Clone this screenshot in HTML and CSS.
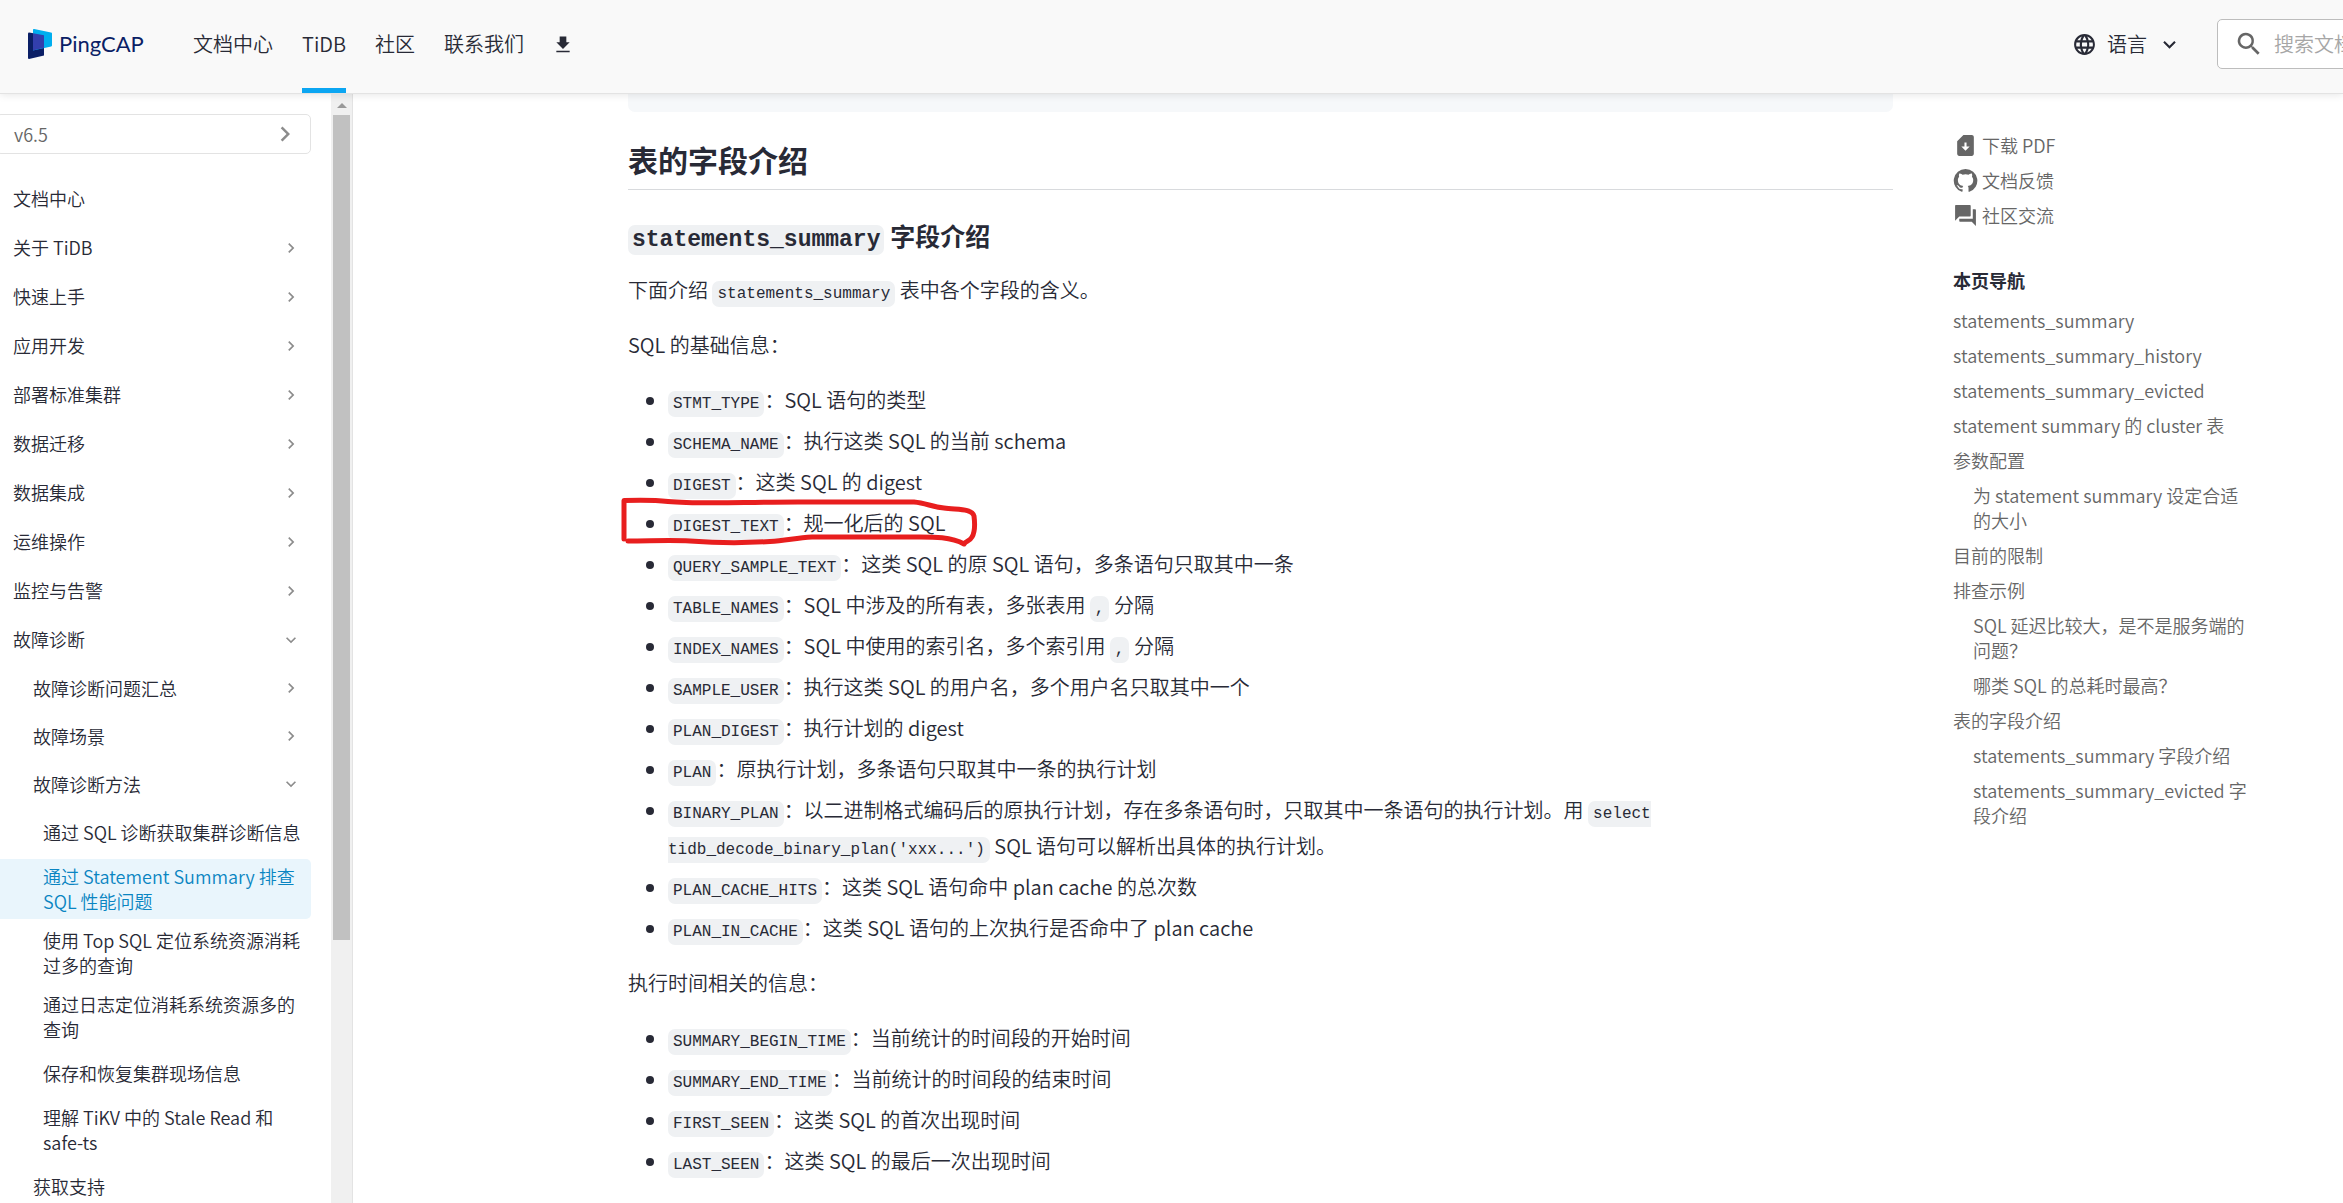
FILE: index.html
```html
<!DOCTYPE html>
<html lang="zh-CN">
<head>
<meta charset="utf-8">
<title>Statement Summary Tables | PingCAP 文档中心</title>
<link rel="stylesheet" href="styles.css">
</head>
<body>
<svg class="defs" aria-hidden="true">
  <symbol id="chev" viewBox="0 0 24 24"><path d="M8.6 16.6 13.2 12 8.6 7.4 10 6l6 6-6 6z"/></symbol>
</svg>

<header class="topbar">
  <a class="logo" href="#">
    <svg width="24" height="30" viewBox="0 0 24 30" aria-hidden="true">
      <path d="M1 3.6 16 6v20.500L1 30a1 1 0 0 1-1-1V4.500a1 1 0 0 1 1-.9z" fill="#0b1f66"/>
      <path d="M5 .9a1 1 0 0 1 1.200-.9L23 3.600a1 1 0 0 1 1 1V16.500a1 1 0 0 1-.8 1L5 21.500z" fill="#00aeef"/>
      <path d="M5 4.200 16 6.300v12.500L5 21.500z" fill="#333fad"/>
    </svg>
    <span>PingCAP</span>
  </a>
  <nav class="topnav">
    <a href="#">文档中心</a>
    <a href="#" class="current">TiDB</a>
    <a href="#">社区</a>
    <a href="#">联系我们</a>
    <a href="#" aria-label="下载"><svg width="20" height="20" viewBox="0 0 24 24"><path d="M20 10h-4V3H8v7H4l8 8zM4 20h16v2H4z"/></svg></a>
  </nav>
  <button class="lang" type="button">
    <svg width="25" height="25" viewBox="0 0 24 24"><path d="M12 2C6.500 2 2 6.500 2 12s4.500 10 10 10 10-4.500 10-10S17.500 2 12 2zm6.900 6h-2.900a15.700 15.700 0 0 0-1.400-3.600A8 8 0 0 1 18.900 8zM12 4c.8 1.200 1.500 2.500 1.900 4h-3.800c.4-1.500 1.100-2.800 1.900-4zM4.300 14a8.200 8.200 0 0 1 0-4h3.300a16.500 16.500 0 0 0 0 4zm.8 2H8c.3 1.300.8 2.500 1.400 3.600A8 8 0 0 1 5.100 16zM8 8H5.100a8 8 0 0 1 4.300-3.600A15.700 15.700 0 0 0 8 8zm4 12c-.8-1.200-1.500-2.500-1.900-4h3.800c-.4 1.400-1.100 2.800-1.900 4zm2.300-6H9.700a14.700 14.700 0 0 1 0-4h4.700a14.700 14.700 0 0 1 0 4zm.3 5.600c.6-1.100 1.100-2.300 1.400-3.600h2.900a8 8 0 0 1-4.300 3.600zM16.400 14a16.500 16.500 0 0 0 0-4h3.400a8.200 8.200 0 0 1 0 4z"/></svg>
    <span>语言</span>
    <svg class="down" width="25" height="25"><use href="#chev"/></svg>
  </button>
  <label class="search">
    <svg width="30" height="30" viewBox="0 0 24 24"><path d="M15.500 14h-.8l-.3-.3A6.500 6.500 0 1 0 13.700 14.400l.3.3v.8l5 5 1.500-1.500zm-6 0a4.500 4.500 0 1 1 0-9 4.500 4.500 0 0 1 0 9z"/></svg>
    <input type="search" placeholder="搜索文档" aria-label="搜索文档">
  </label>
</header>

<div class="page">
  <aside class="side">
    <div class="side-body">
      <button class="version" type="button"><span>v6.5</span><svg width="30" height="30"><use href="#chev"/></svg></button>
      <nav class="tree">
        <a href="#">文档中心</a>
        <a href="#">关于 TiDB<svg><use href="#chev"/></svg></a>
        <a href="#">快速上手<svg><use href="#chev"/></svg></a>
        <a href="#">应用开发<svg><use href="#chev"/></svg></a>
        <a href="#">部署标准集群<svg><use href="#chev"/></svg></a>
        <a href="#">数据迁移<svg><use href="#chev"/></svg></a>
        <a href="#">数据集成<svg><use href="#chev"/></svg></a>
        <a href="#">运维操作<svg><use href="#chev"/></svg></a>
        <a href="#">监控与告警<svg><use href="#chev"/></svg></a>
        <a href="#">故障诊断<svg class="down"><use href="#chev"/></svg></a>
        <a href="#" class="l1">故障诊断问题汇总<svg><use href="#chev"/></svg></a>
        <a href="#" class="l1">故障场景<svg><use href="#chev"/></svg></a>
        <a href="#" class="l1">故障诊断方法<svg class="down"><use href="#chev"/></svg></a>
        <a href="#" class="l2">通过 SQL 诊断获取集群诊断信息</a>
        <a href="#" class="l2 active">通过 Statement Summary 排查 SQL 性能问题</a>
        <a href="#" class="l2">使用 Top SQL 定位系统资源消耗过多的查询</a>
        <a href="#" class="l2">通过日志定位消耗系统资源多的查询</a>
        <a href="#" class="l2">保存和恢复集群现场信息</a>
        <a href="#" class="l2">理解 TiKV 中的 Stale Read 和 safe-ts</a>
        <a href="#" class="l1">获取支持</a>
      </nav>
    </div>
    <div class="scrollbar" aria-hidden="true"><div class="arrow"></div><div class="thumb"></div></div>
  </aside>

  <main class="doc">
    <div class="block-end"></div>
    <h2>表的字段介绍</h2>
    <h3><code>statements_summary</code> 字段介绍</h3>
    <p>下面介绍 <code>statements_summary</code> 表中各个字段的含义。</p>
    <p>SQL 的基础信息：</p>
    <ul>
      <li><code>STMT_TYPE</code>：SQL 语句的类型</li>
      <li><code>SCHEMA_NAME</code>：执行这类 SQL 的当前 schema</li>
      <li><code>DIGEST</code>：这类 SQL 的 digest</li>
      <li class="marked"><code>DIGEST_TEXT</code>：规一化后的 SQL
        <svg class="pen" width="368" height="58" viewBox="616 494 368 58" aria-hidden="true"><path d="M624 539V500.500C640 500 655 500 668 501.500 700 504.500 740 502 798 502H914C926 503 932 507 944 508 956 510 972 508 974 516 975 524 975 532 972 537 970 541 966 541 964 544 950 536 930 537 911 537H812C795 538 785 541 770 541.500 740 543.500 710 542.500 690 541 670 540 650 541 628 541"/></svg></li>
      <li><code>QUERY_SAMPLE_TEXT</code>：这类 SQL 的原 SQL 语句，多条语句只取其中一条</li>
      <li><code>TABLE_NAMES</code>：SQL 中涉及的所有表，多张表用 <code>,</code> 分隔</li>
      <li><code>INDEX_NAMES</code>：SQL 中使用的索引名，多个索引用 <code>,</code> 分隔</li>
      <li><code>SAMPLE_USER</code>：执行这类 SQL 的用户名，多个用户名只取其中一个</li>
      <li><code>PLAN_DIGEST</code>：执行计划的 digest</li>
      <li><code>PLAN</code>：原执行计划，多条语句只取其中一条的执行计划</li>
      <li><code>BINARY_PLAN</code>：以二进制格式编码后的原执行计划，存在多条语句时，只取其中一条语句的执行计划。用 <code>select tidb_decode_binary_plan('xxx...')</code> SQL 语句可以解析出具体的执行计划。</li>
      <li><code>PLAN_CACHE_HITS</code>：这类 SQL 语句命中 plan cache 的总次数</li>
      <li><code>PLAN_IN_CACHE</code>：这类 SQL 语句的上次执行是否命中了 plan cache</li>
    </ul>
    <p>执行时间相关的信息：</p>
    <ul>
      <li><code>SUMMARY_BEGIN_TIME</code>：当前统计的时间段的开始时间</li>
      <li><code>SUMMARY_END_TIME</code>：当前统计的时间段的结束时间</li>
      <li><code>FIRST_SEEN</code>：这类 SQL 的首次出现时间</li>
      <li><code>LAST_SEEN</code>：这类 SQL 的最后一次出现时间</li>
    </ul>
  </main>

  <aside class="toc">
    <div class="actions">
      <a href="#"><svg viewBox="0 0 24 24"><path d="M18 2h-8L4 8v12c0 1.100.9 2 2 2h12c1.100 0 2-.9 2-2V4c0-1.100-.9-2-2-2zm-6 15-4-4h3V9h2v4h3z"/></svg>下载 PDF</a>
      <a href="#"><svg viewBox="0 0 24 24"><path d="M12 .9A11.300 11.300 0 0 0 8.400 22.900c.6.100.8-.2.8-.5v-2.100c-3.200.7-3.900-1.400-3.900-1.400-.5-1.300-1.300-1.700-1.300-1.700-1-.7.100-.7.100-.7 1.200.1 1.800 1.200 1.800 1.200 1 1.800 2.700 1.300 3.300 1 .1-.8.400-1.300.7-1.500-2.500-.3-5.200-1.300-5.200-5.700 0-1.200.5-2.300 1.200-3.100-.1-.3-.5-1.500.1-3 0 0 1-.3 3.200 1.100a11 11 0 0 1 5.700 0c2.200-1.500 3.200-1.200 3.200-1.200.6 1.600.2 2.800.1 3.100.7.8 1.200 1.800 1.200 3.100 0 4.400-2.700 5.400-5.300 5.700.4.300.8 1 .8 2.100v3.100c0 .3.200.7.800.5A11.300 11.300 0 0 0 12 .9z"/></svg>文档反馈</a>
      <a href="#"><svg viewBox="0 0 24 24"><path d="M21 6h-2v9H6v2c0 .6.400 1 1 1h11l4 4V7c0-.6-.4-1-1-1zm-4 6V3c0-.6-.4-1-1-1H3c-.6 0-1 .4-1 1v14l4-4h10c.6 0 1-.4 1-1z"/></svg>社区交流</a>
    </div>
    <h4>本页导航</h4>
    <nav class="toc-list">
      <a href="#">statements_summary</a>
      <a href="#">statements_summary_history</a>
      <a href="#">statements_summary_evicted</a>
      <a href="#">statement summary 的 cluster 表</a>
      <a href="#">参数配置</a>
      <a href="#" class="sub">为 statement summary 设定合适的大小</a>
      <a href="#">目前的限制</a>
      <a href="#">排查示例</a>
      <a href="#" class="sub">SQL 延迟比较大，是不是服务端的问题？</a>
      <a href="#" class="sub">哪类 SQL 的总耗时最高？</a>
      <a href="#">表的字段介绍</a>
      <a href="#" class="sub">statements_summary 字段介绍</a>
      <a href="#" class="sub">statements_summary_evicted 字段介绍</a>
    </nav>
  </aside>
</div>
</body>
</html>
```
FILE: styles.css
```css
* { box-sizing: border-box; }

body {
  margin: 0;
  height: 100vh;
  display: flex;
  flex-direction: column;
  overflow: hidden;
  background: #fff;
  color: #282a36;
  font: 350 20px/36px "Noto Sans CJK SC", sans-serif;
}

a { color: inherit; text-decoration: none; }
button { font: inherit; color: inherit; cursor: pointer; }
svg { flex: none; fill: currentColor; }
.defs { position: absolute; width: 0; height: 0; }
.down { rotate: 90deg; }

/* Top bar */
.topbar {
  flex: none;
  position: relative;
  z-index: 1;
  display: flex;
  align-items: center;
  height: 94px;
  padding: 0 0 5px 28px;
  overflow: hidden;
  background: #f9f9f9;
  border-bottom: 1px solid #e3e3e3;
  box-shadow: 0 1px 8px rgba(0, 0, 0, 0.1);
}
.logo {
  display: flex;
  align-items: center;
  gap: 7px;
  width: 135px;
  color: #0b1f66;
  font: 22px/30px Lato, sans-serif;
}
.topnav { display: flex; gap: 29px; margin: 0 0 -5px 30px; align-self: stretch; }
.topnav a {
  display: flex;
  align-items: center;
  border-bottom: 5px solid transparent;
}
.topnav .current { border-color: #0ca6f2; }
.lang {
  display: flex;
  align-items: center;
  gap: 10px;
  margin-left: auto;
  padding: 0;
  border: 0;
  background: none;
}
.search {
  display: flex;
  align-items: center;
  flex: none;
  gap: 10px;
  width: 300px;
  height: 50px;
  margin: 0 -174px 0 35px;
  padding-left: 16px;
  border: 1px solid #bdbdbd;
  border-radius: 5px;
  background: #fff;
  color: #666;
}
.search input {
  min-width: 0;
  flex: 1;
  padding: 0;
  border: 0;
  outline: 0;
  background: none;
  font: inherit;
}
.search input::placeholder { color: #a6a6a6; }

/* Columns */
.page { flex: 1; min-height: 0; display: flex; }

.side {
  flex: none;
  width: 353px;
  display: flex;
  border-right: 1px solid #e3e3e3;
  font-size: 18px;
  line-height: 25px;
  overflow: hidden;
}
.side-body { flex: 1; padding: 20px 20px 0 0; }
.version {
  display: flex;
  align-items: center;
  justify-content: space-between;
  width: calc(100% + 4px);
  height: 40px;
  margin-left: -4px;
  padding: 0 10px 0 17px;
  border: 1px solid #e3e3e3;
  border-radius: 5px;
  background: #fff;
  color: #666;
}
.version svg { color: #8c8c8c; }
.tree { display: flex; flex-direction: column; gap: 4px; padding-top: 22px; }
.tree a {
  display: flex;
  align-items: center;
  justify-content: space-between;
  min-height: 45px;
  padding: 5px 10px 5px 13px;
}
.tree svg { width: 20px; height: 20px; color: #8c8c8c; }
.tree .l1 { min-height: 44px; padding-left: 33px; }
.tree .l2 { padding-left: 43px; padding-right: 4px; }
.tree .active { background: #e9f5fc; color: #0a85c2; border-radius: 0 5px 5px 0; }

.scrollbar {
  width: 21px;
  padding: 0 2px;
  background: #f0f0f0;
}
.arrow {
  height: 21px;
  padding: 9px 4px 0;
}
.arrow::before {
  content: "";
  display: block;
  border: 5px solid transparent;
  border-top: 0;
  border-bottom: 5px solid #999;
}
.thumb { height: 74.4%; background: #c1c1c1; }

/* Article */
.doc { flex: 1; min-width: 0; padding: 0 60px 0 275px; overflow: hidden; }
.block-end { height: 18px; background: #f6f8fa; border-radius: 0 0 7px 7px; }
h2 {
  margin: 27px 0;
  padding-bottom: 10px;
  border-bottom: 1px solid #d8dadd;
  font-size: 30px;
  line-height: 40px;
}
h3 { margin: 27px 0 19px; font-size: 25px; line-height: 36px; }
p { margin: 19px 0; }
ul { margin: 19px 0; padding-left: 40px; }
li + li { margin-top: 5px; }
code {
  padding: 4px 5px;
  border-radius: 7px;
  background: #eff1f3;
  font: 16px "Liberation Mono", monospace;
}
h3 code { padding: 2px 4px; font-size: 23px; font-weight: 700; }
.marked { position: relative; }
.pen {
  position: absolute;
  left: -52px;
  top: -11px;
  fill: none;
  stroke: #e81e1e;
  stroke-width: 5;
  stroke-linecap: round;
  stroke-linejoin: round;
}

/* Page outline */
.toc {
  flex: none;
  width: 390px;
  padding: 39px 94px 0 0;
  color: #666;
  font-size: 18px;
  line-height: 25px;
}
.actions { display: flex; flex-direction: column; gap: 10px; }
.actions a { display: flex; align-items: center; gap: 4px; }
.actions svg { width: 25px; height: 25px; }
h4 { margin: 37px 0 13px; color: #282a36; font-size: 18px; line-height: 30px; }
.toc-list { display: flex; flex-direction: column; gap: 10px; }
.toc-list .sub { padding-left: 20px; }
```
